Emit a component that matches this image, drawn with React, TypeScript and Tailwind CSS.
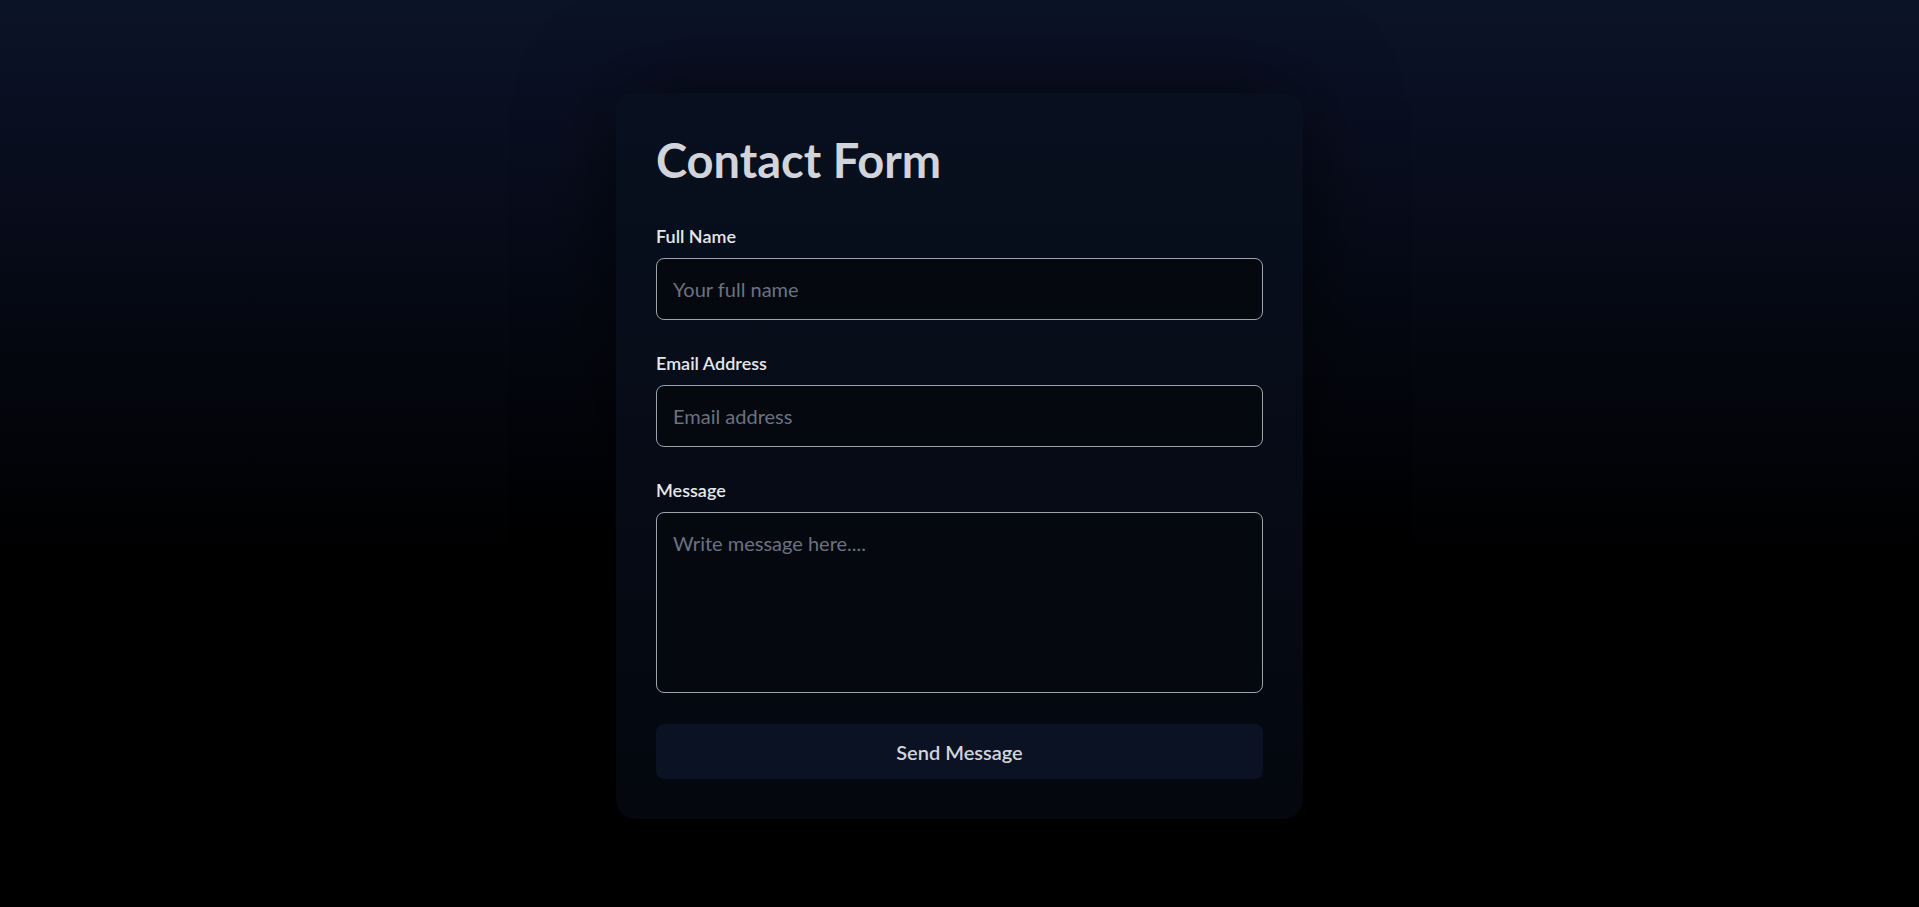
import React from 'react';

const fieldClass =
  'block w-full rounded-lg border border-[#9ca3af] bg-[#05080f] px-4 py-4 text-[20px] leading-7 text-gray-200 placeholder:text-[#6b7280] outline-none';

const labelClass = 'mb-[11px] block text-[18px] font-semibold leading-[22px] text-[#e5e7eb]';

const App: React.FC = () => {
  return (
    <div
      className="min-h-screen w-full bg-[linear-gradient(to_bottom,#0b1328_0%,#070b19_25%,#03050b_45%,#000000_62%)] pt-[93px]"
      style={{ fontFamily: '"Segoe UI", Lato, "Noto Sans", sans-serif' }}
    >
      <div className="mx-auto w-[687px] rounded-[20px] bg-gradient-to-b from-[#08101f] to-[#04070e] p-10 shadow-[0_0_90px_rgba(0,0,0,0.6)]">
        {/* Title */}
        <h1 className="mb-[38px] text-[47px] font-bold leading-[54px] text-[#d1d5db]">Contact Form</h1>

        <form onSubmit={(e) => e.preventDefault()}>
          {/* Full Name */}
          <label className={labelClass}>Full Name</label>
          <input type="text" placeholder="Your full name" className={`${fieldClass} mb-8 h-[62px]`} />

          {/* Email */}
          <label className={labelClass}>Email Address</label>
          <input type="email" placeholder="Email address" className={`${fieldClass} mb-8 h-[62px]`} />

          {/* Message */}
          <label className={labelClass}>Message</label>
          <textarea placeholder="Write message here...." className={`${fieldClass} h-[181px] resize-none`} />

          <button
            type="submit"
            className="mt-[31px] block h-[55px] w-full rounded-lg bg-[#0b1224] text-[20px] font-semibold text-[#d1d5db]"
          >
            Send Message
          </button>
        </form>
      </div>
    </div>
  );
};

export default App;
